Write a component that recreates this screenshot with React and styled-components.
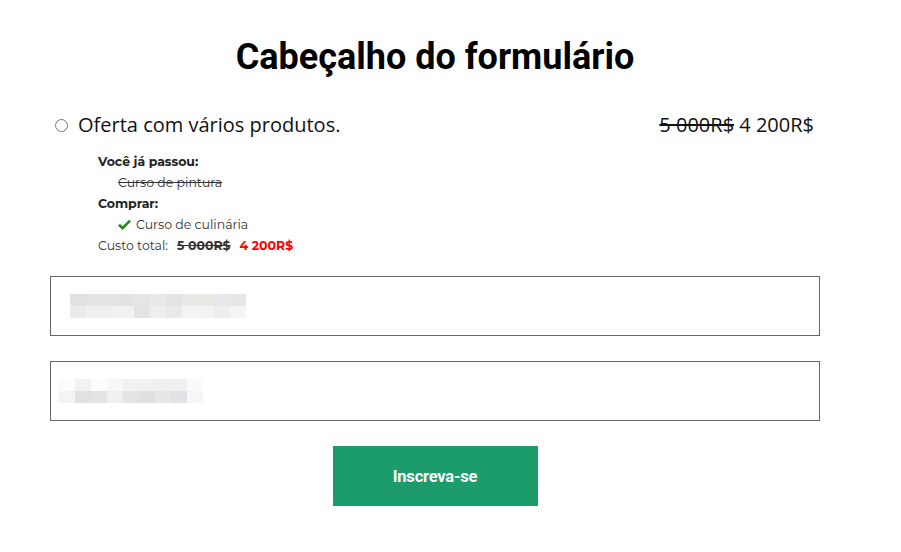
import React from "react";
import styled, { createGlobalStyle } from "styled-components";

const Global = createGlobalStyle`
  html, body { margin: 0; padding: 0; background: #fff; }
  body { font-family: "Open Sans", sans-serif; color: #222; }
`;

const Page = styled.div`
  width: 770px;
  padding: 33px 0 0 50px;
  display: flex;
  flex-direction: column;
`;

const Title = styled.h1`
  margin: 0;
  text-align: center;
  font-family: Roboto, sans-serif;
  font-weight: 700;
  font-size: 36px;
  line-height: 48px;
  color: #000;
`;

const OfferRow = styled.label`
  margin-top: 31px;
  display: flex;
  align-items: center;
  padding: 0 6px 0 5px;
  font-family: "Open Sans", sans-serif;
  font-size: 20px;
  line-height: 26px;
  color: #111;
`;

const Radio = styled.span`
  width: 11px;
  height: 11px;
  border: 1px solid #777;
  border-radius: 50%;
  margin-right: 10px;
  flex: none;
`;

const OfferName = styled.span`
  flex: 1;
`;

const Old = styled.s`
  text-decoration-thickness: 1.5px;
`;

const Details = styled.div`
  margin: 13px 0 0 48px;
  font-family: "Montserrat", "Open Sans", sans-serif;
  font-size: 12.5px;
  line-height: 21px;
  color: #333;
`;

const Label = styled.div`
  font-weight: 700;
  color: #222;
`;

const Item = styled.div`
  padding-left: ${(p) => p.$indent}px;
  display: flex;
  align-items: center;
  gap: 5px;
  ${(p) => (p.$struck ? "text-decoration: line-through;" : "")}
`;

const Total = styled.div`
  display: flex;
  gap: 9px;
`;

const TotalOld = styled.s`
  font-weight: 700;
  color: #333;
`;

const TotalNew = styled.span`
  font-weight: 700;
  color: #f00;
`;

const Field = styled.div`
  margin-top: ${(p) => p.$top}px;
  height: 58px;
  border: 1px solid #666;
  display: flex;
  align-items: center;
  padding-left: ${(p) => p.$pad}px;
`;

const Blur = styled.div`
  display: grid;
  grid-template-columns: repeat(${(p) => p.$cols}, 16px);
  grid-auto-rows: 12px;
`;

const Px = styled.div`
  background: ${(p) => p.$c};
`;

const Button = styled.button`
  align-self: center;
  margin-top: 25px;
  width: 205px;
  height: 60px;
  border: none;
  background: #1b9c6a;
  color: #fff;
  font-family: Roboto, sans-serif;
  font-weight: 700;
  font-size: 16.5px;
  letter-spacing: -0.2px;
`;

const row1a = ["#e3e2e1", "#e3e4e6", "#e5e3e5", "#e3e1e4", "#e4e5e4", "#e8e9e9", "#e4e2e4", "#e9e9e7", "#e9e9e5", "#e7e8e9", "#e6e5e7"];
const row1b = ["#eceaeb", "#eff0ef", "#f0f0f0", "#f3f2f2", "#e4e3e3", "#efeeee", "#eae8eb", "#f4f4f4", "#f3f3f1", "#eeeded", "#f5f5f5"];
const row2a = ["#fbfbfb", "#f2f2f2", "#fcfcfc", "#f7f7f7", "#f1f1f1", "#f1f1f1", "#f0f0f0", "#f0f0f0", "#fafafa"];
const row2b = ["#f4f4f4", "#e2e1e1", "#e3e3e2", "#eff0ef", "#e5e3e3", "#dfe0e1", "#e8e7e5", "#e2e1e5", "#f5f6f5"];

const Check = () => (
  <svg width="13" height="11" viewBox="0 0 13 11">
    <path d="M1 5.8 L4.6 9.2 L12 1.6" fill="none" stroke="#1e8a1e" strokeWidth="2.6" />
  </svg>
);

export default function App() {
  return (
    <>
      <Global />
      <Page>
        <Title>Cabeçalho do formulário</Title>
        <OfferRow>
          <Radio />
          <OfferName>Oferta com vários produtos.</OfferName>
          <span>
            <Old>5 000R$</Old> 4 200R$
          </span>
        </OfferRow>
        <Details>
          <Label>Você já passou:</Label>
          <Item $indent={20} $struck>Curso de pintura</Item>
          <Label>Comprar:</Label>
          <Item $indent={20}>
            <Check />
            Curso de culinária
          </Item>
          <Total>
            <span>Custo total:</span>
            <TotalOld>5 000R$</TotalOld>
            <TotalNew>4 200R$</TotalNew>
          </Total>
        </Details>
        <Field $top={20} $pad={19}>
          <Blur $cols={11}>
            {[...row1a, ...row1b].map((c, i) => (
              <Px key={i} $c={c} />
            ))}
          </Blur>
        </Field>
        <Field $top={25} $pad={8}>
          <Blur $cols={9}>
            {[...row2a, ...row2b].map((c, i) => (
              <Px key={i} $c={c} />
            ))}
          </Blur>
        </Field>
        <Button>Inscreva-se</Button>
      </Page>
    </>
  );
}
